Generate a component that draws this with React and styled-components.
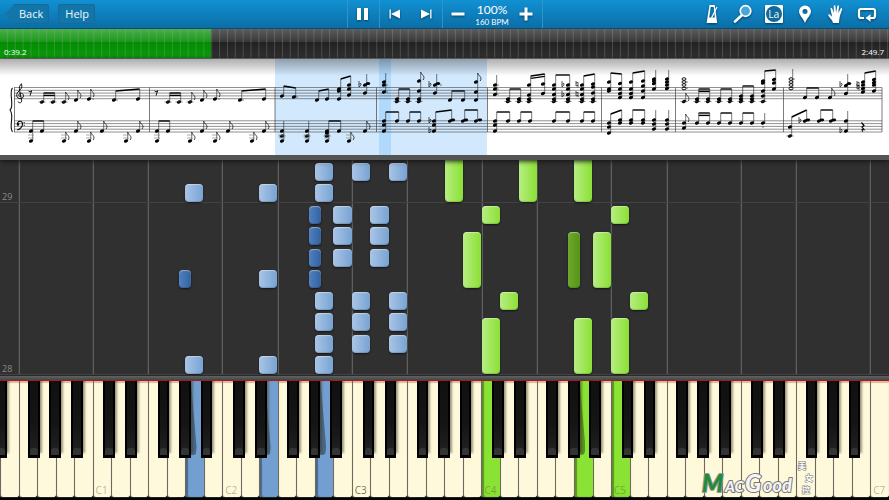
import React from 'react';
import styled, { createGlobalStyle, css } from 'styled-components';

const GlobalStyle = createGlobalStyle`
    * {
        box-sizing: border-box;
    }

    body {
        margin: 0;
        background: #303030;
        font-family: 'Open Sans', 'Noto Sans', sans-serif;
    }

    button {
        font-family: inherit;
        padding: 0;
        border: none;
        background: none;
        cursor: pointer;
    }
`;

const Page = styled.div`
    display: flex;
    flex-direction: column;
    min-height: 100vh;
    overflow: hidden;
`;

/* toolbar */

const Toolbar = styled.header`
    display: grid;
    grid-template-columns: 1fr auto 1fr;
    height: 29px;
    background: linear-gradient(#1191d3, #0b6ea6);
    border-bottom: 1px solid #0a4c72;
    color: #ffffff;
`;

const ToolbarLeft = styled.div`
    display: flex;
    align-items: center;
    gap: 9px;
    padding-left: 5px;
`;

const ToolbarCenter = styled.div`
    display: flex;
    border-right: 1px solid #3293c6;
`;

const ToolbarRight = styled.div`
    display: flex;
    align-items: center;
    justify-content: flex-end;
    padding-right: 7px;
`;

const TextButton = styled.button`
    height: 20px;
    padding: 0 6px 0 7px;
    border-radius: 3px;
    background: #1276ab;
    box-shadow: inset 0 0 1px 1px #1a6a98;
    color: #f0f8fd;
    font-size: 11px;
    font-weight: 500;
    line-height: 20px;

    ${({ $arrow }) => $arrow && css`
        padding-left: 14px;
        clip-path: polygon(0 50%, 9px 0, 100% 0, 100% 100%, 9px 100%);
    `}
`;

const Group = styled.div`
    display: flex;
    align-items: center;
    border-left: 1px solid #3293c6;
`;

const IconButton = styled.button`
    display: flex;
    align-items: center;
    justify-content: center;
    width: 31px;
    height: 28px;
    color: #ffffff;
    filter: drop-shadow(0 1px 1px rgba(0, 40, 70, 0.7));
`;

const Tempo = styled.div`
    display: flex;
    flex-direction: column;
    align-items: center;
    width: 37px;
    font-family: Lato, sans-serif;
    white-space: nowrap;
`;

const TempoPercent = styled.span`
    font-size: 12px;
    line-height: 15px;
`;

const TempoBpm = styled.span`
    font-size: 8px;
    line-height: 10px;
`;

/* timeline */

const Timeline = styled.div`
    position: relative;
    display: flex;
    align-items: flex-end;
    justify-content: space-between;
    height: 30px;
    padding: 0 5px 0 4px;
    border-bottom: 1px solid #777777;
    background: linear-gradient(#5c5c5c, #393939 44%, #222222 46%, #303030);
    color: #ffffff;
    font-size: 8px;
    line-height: 13px;

    &::after {
        content: '';
        position: absolute;
        inset: 0;
        background: linear-gradient(90deg, transparent calc(100% - 1px), rgba(160, 160, 160, 0.3) 0) 0 0 / calc(100% / 113) 100%;
    }
`;

const Played = styled.div`
    position: absolute;
    inset: 0 auto 0 0;
    background: linear-gradient(#4bae4b, #1b981b 44%, #028c02 46%, #0b9a0b);
`;

const Time = styled.span`
    position: relative;
    z-index: 1;
`;

/* sheet music */

const Sheet = styled.section`
    background: #ffffff;
    border-bottom: 5px solid #535555;
    box-shadow: 0 1px 5px #111111;
    z-index: 1;

    svg {
        display: block;
        width: 100%;
        height: auto;
    }
`;

/* falling notes */

const Roll = styled.section`
    position: relative;
    flex: 1;
    min-height: 215px;
    overflow: hidden;
    background: #303030;
`;

const OctaveLine = styled.div`
    position: absolute;
    top: 0;
    bottom: 0;
    width: 1px;
    background: #5f5f5f;
    box-shadow: -1px 0 0 #3c3c3c;
`;

const MeasureLine = styled.div`
    position: absolute;
    left: 0;
    right: 0;
    height: 1px;
    background: #424242;
`;

const MeasureNumber = styled.span`
    position: absolute;
    left: 2px;
    color: #8a8a8a;
    font-size: 9px;
    line-height: 12px;
`;

const noteColors = {
    blue: 'linear-gradient(90deg, #a9c5e6, #78a3d3)',
    darkBlue: 'linear-gradient(90deg, #4f80c0, #33629f)',
    green: 'linear-gradient(90deg, #b6ee82, #8be034)',
    darkGreen: 'linear-gradient(90deg, #6ca82c, #559417)',
};

const Note = styled.div`
    position: absolute;
    border-radius: 4px;
    background: ${({ $color }) => noteColors[$color]};
    box-shadow: 0 1px 2px #151515, inset 0 1px 1px rgba(255, 255, 255, 0.4), inset 0 -1px 1px rgba(0, 0, 0, 0.15);
`;

const Ledge = styled.div`
    height: 5px;
    border-top: 1px solid #2a2a2a;
    background: linear-gradient(#626262, #454545);
`;

/* keyboard */

const Keyboard = styled.section`
    position: relative;
    display: flex;
    height: 120px;
    border-top: 1px solid #a01c20;
    border-bottom: 2px solid #000000;
    background: #000000;
    overflow: hidden;
`;

const KeySlot = styled.div`
    position: relative;
    flex: 1;
    min-width: 0;
`;

const keyColors = { ivory: '#fff9dc', blue: '#739fd0', green: '#8ae234' };

const WhiteKey = styled.button`
    display: flex;
    align-items: flex-end;
    width: 100%;
    height: 100%;
    padding: 0 0 0 2px;
    border-left: 1px solid #6c6a5e;
    border-bottom: 1px solid #222222;
    border-radius: 0 0 3px 3px;
    background: ${({ $color }) => keyColors[$color]};
    box-shadow: inset 0 2px 1px rgba(160, 60, 50, 0.35);
    color: ${({ $strong }) => ($strong ? 'rgba(60, 55, 20, 0.7)' : 'rgba(80, 75, 30, 0.4)')};
    font-size: 10px;
    line-height: 14px;

    ${({ $color }) => $color !== 'ivory' && css`
        box-shadow: inset 2px 0 1px rgba(0, 0, 0, 0.35);
    `}
`;

const BlackKey = styled.button`
    position: absolute;
    top: 0;
    left: ${({ $left }) => $left}%;
    z-index: 1;
    width: 63%;
    height: 77px;
    border: 2px solid #000000;
    border-top: none;
    border-bottom-width: 3px;
    background: linear-gradient(#101010, #151515 60%, #222222);
    box-shadow: 2px -5px 2px rgba(60, 55, 30, 0.5);

    &::after {
        content: '';
        position: absolute;
        left: 0;
        right: 0;
        bottom: 0;
        height: 7px;
        border-radius: 3px 3px 0 0;
        background: #343434;
    }
`;

const KeyShade = styled.div`
    position: absolute;
    top: 0;
    left: 10%;
    width: 52%;
    height: 74px;
    border-radius: 0 0 4px 0;
    background: rgba(0, 0, 0, 0.35);
    clip-path: polygon(0 0, 40% 0, 100% 90%, 90% 100%, 0 100%);
`;

const Watermark = styled.svg`
    position: absolute;
    right: 69px;
    bottom: 0;
    z-index: 2;
    width: 120px;
    height: 38px;
`;

/* E0 .. C7, C1 is the sixth white key */
const KEY_COUNT = 48;
const LETTERS = 'CDEFGAB';
const BLACK_OFFSET = { C: 58, D: 77, F: 51, G: 67, A: 83 };
const PRESSED = { 10: 'blue', 14: 'blue', 17: 'blue', 26: 'green', 31: 'green', 33: 'green' };

const keys = Array.from({ length: KEY_COUNT }, (_, i) => {
    const letter = LETTERS[(i + 2) % 7];
    return { i, letter, octave: Math.floor((i + 2) / 7), color: PRESSED[i] || 'ivory' };
});

// key, starting steps, length in steps
const SHORT = 0.84;
const LONG = 2.64;
const notes = [
    [10, [0, 8], SHORT, 'blue'],
    [14, [0, 4, 8], SHORT, 'blue'],
    [17, [0, 1, 2, 3, 8, 9], SHORT, 'blue'],
    [18, [5, 6, 7], SHORT, 'blue'],
    [19, [1, 2, 3, 9], SHORT, 'blue'],
    [20, [5, 6, 7], SHORT, 'blue'],
    [21, [1, 2, 3, 9], SHORT, 'blue'],
    [9, [4], SHORT, 'darkBlue'],
    [16, [4, 5, 6, 7], SHORT, 'darkBlue'],
    [24, [8], LONG, 'green'],
    [28, [8], LONG, 'green'],
    [31, [0, 8], LONG, 'green'],
    [26, [0], LONG, 'green'],
    [26, [7], SHORT, 'green'],
    [25, [4], LONG, 'green'],
    [27, [3], SHORT, 'green'],
    [30, [4], LONG, 'darkGreen'],
    [32, [4], LONG, 'green'],
    [33, [0], LONG, 'green'],
    [33, [7], SHORT, 'green'],
    [34, [3], SHORT, 'green'],
].flatMap(([key, steps, length, color]) => steps.map((step) => ({ key, step, length, color })));

const noteStyle = ({ key, step, length, color }) => {
    const sharp = color.startsWith('dark');
    const offset = sharp ? BLACK_OFFSET[LETTERS[(key + 2) % 7]] / 100 : 0;
    return {
        left: `${((key + offset) / KEY_COUNT) * 100}%`,
        width: `${((sharp ? 0.64 : 0.98) / KEY_COUNT) * 100}%`,
        bottom: `${step * 10 + 0.3}%`,
        height: `${length * 10}%`,
    };
};

/* Sheet drawing. A group is [chords, beamFrom, beamTo, beams]
   and a chord is [x, heads]. Groups of one chord take a flag instead of a beam. */
const opening = [
    [[[42, [43]], [53, [43]]], 34, 34, 2],
    [[[64, [43]]], 33, 33, 1],
    [[[76, [41]]], 31, 31, 1],
    [[[89, [40]]], 30, 30, 1],
    [[[114, [41]], [138, [40]]], 32, 30, 1],
    [[[31, [72, 82]], [42, [72]]], 62, 62, 1],
    [[[64, [82]]], 73, 73, 1],
    [[[76, [72]]], 62, 62, 1],
    [[[89, [82]]], 73, 73, 1],
    [[[102, [72]]], 62, 62, 1],
    [[[126, [82]]], 73, 73, 1],
    [[[138, [72]]], 62, 62, 1],
];

const C3 = [26, 30, 35.5, 40, 42.5];
const groups = [
    [[[282, [37]], [294, [38]]], 27, 29, 1],
    [[[317, [41]], [327, [40]]], 32, 30, 1],
    [[[339, [30, 32, 40]], [349, [26, 30, 36]]], 20, 17, 1],
    [[[365, [26, 34]], [368, [24.5]]], 15, 15, 0],
    [[[282, [72, 77, 82]]], 62, 62, 0],
    [[[307, [72, 77, 82]]], 62, 62, 0],
    [[[327, [72, 74, 77, 82]], [339, [72]]], 62, 62, 1],
    [[[349, [82]]], 73, 73, 1],
    [[[365, [72]]], 62, 62, 1],

    [[[384, [23, 26, 33]]], 14, 14, 0],
    [[[397, [40, 42.5]], [408, [40, 42.5]]], 30, 30, 1],
    [[[419, [22, 32, 40, 42.5]]], 13, 13, 1],
    [[[435, [26, 34]], [438, [24.5]]], 15, 15, 0],
    [[[450, [41]], [463, [41]]], 32, 32, 1],
    [[[476, [23, 33, 41]]], 14, 14, 1],
    [[[384, [62, 66, 72]], [397, [62]]], 53, 53, 1],
    [[[408, [62]], [419, [62]]], 53, 53, 1],
    [[[434, [62, 66, 72]], [450, [62]]], 53, 51, 1],
    [[[463, [62]], [476, [62]]], 51, 51, 1],

    [[[495, [26, 30, 35.5]]], 16, 16, 0],
    [[[508, [40, 42.5]], [519, [40, 42.5]]], 30, 30, 1],
    [[[529, [26, 36, 40, 42.5]], [543, [25, 34.5]]], 17, 15, 2],
    [[[554, C3], [568, C3]], 16, 16, 1],
    [[[582, C3], [593, [25, 28, 34, 40, 42.5]]], 17, 15, 1],
    [[[495, [62, 66, 72]], [508, [62]]], 53, 53, 1],
    [[[519, [62]], [530, [62]]], 53, 53, 1],
    [[[554, [62]], [568, [62]]], 53, 53, 1],
    [[[582, [62]], [593, [62]]], 53, 53, 1],

    [[[609, [23, 30, 32]], [620, [24.5, 30, 34.5, 38.5]]], 14, 15, 1],
    [[[631, [23, 30, 34.5, 38.5]], [643, [22, 27, 32, 38.5]]], 14, 12, 1],
    [[[654, [20, 22, 24.5, 30]]], 11, 11, 0],
    [[[667, [20, 23, 26, 29.5]]], 11, 11, 0],
    [[[609, [64, 68, 74]], [620, [61, 64]]], 55, 51, 1],
    [[[631, [61, 64]], [643, [61, 64]]], 51, 51, 1],
    [[[654, [61, 65, 70]]], 51, 51, 0],
    [[[667, [61, 65, 70]]], 51, 51, 0],

    [[[684, [42.5]]], 34, 34, 1],
    [[[697, [40, 42.5]], [708, [40, 42.5]]], 30, 30, 2],
    [[[719, [40, 42.5]], [730, [40, 42.5]]], 30, 30, 1],
    [[[741, [37, 40, 42.5]], [752, [37, 40, 42.5]]], 27, 27, 1],
    [[[763, [22, 24, 32, 37, 42.5]], [774, [20.5, 24, 30]]], 12, 11, 1],
    [[[684, [64, 69]]], 55, 55, 1],
    [[[697, [64]], [708, [64]]], 54, 54, 2],
    [[[719, [64]], [730, [64]]], 54, 54, 1],
    [[[741, [64]], [752, [64]]], 54, 54, 1],
    [[[763, [64]]], 54, 54, 0],

    [[[805, [38.5]], [817, [38.5]]], 29, 29, 1],
    [[[830, [38.5]]], 29, 29, 1],
    [[[846, [26.5, 34.5]], [849, [24.5]]], 15, 15, 0],
    [[[863, [23, 26, 29.5, 33]], [874, [20.5, 23.5, 26, 32]]], 14, 12, 1],
    [[[790, [68, 77]], [805, [62]]], 58, 51, 1],
    [[[819, [62]], [831, [62]]], 51, 51, 1],
    [[[846, [62, 72]]], 52, 52, 0],
];

const pairs = [[453, 61], [466, 61], [480, 61], [808, 61], [822, 61], [834, 61]];
const dots = [[93, 40], [117, 41], [219, 40], [243, 41], [297, 38], [387, 33], [387, 26], [441, 26], [498, 26], [498, 30], [498, 35], [687, 23], [687, 29], [763, 68], [794, 20]];
const flats = [[359, 28], [429, 28], [429, 64], [429, 74], [562, 28], [562, 38], [799, 64], [840, 28], [840, 74]];
const naturals = [[576, 28], [576, 38], [857, 28], [857, 31]];

const Chord = ({ x, heads, top }) => (
    <g>
        {heads.map((y) => (
            <ellipse key={y} cx={x} cy={y} rx="2.2" ry="1.5" transform={`rotate(-20 ${x} ${y})`} />
        ))}
        <path d={`M${x + 1.7} ${Math.max(...heads)}V${top}`} stroke="#222" strokeWidth="0.6" />
        {heads.filter((y) => (y > 42 && y < 44) || y === 77).map((y) => (
            <path key={y} d={`M${x - 3.5} ${y}h7`} stroke="#333" strokeWidth="0.6" />
        ))}
        {heads.some((y) => y > 80) && (
            <path d={`M${x - 3} 76h6m-6 3h6`} stroke="#777" strokeWidth="0.6" />
        )}
    </g>
);

const NoteGroup = ({ chords, from, to, beams }) => {
    const first = chords[0][0] + 1.7;
    const last = chords[chords.length - 1][0] + 1.7;
    if (chords.length === 1) {
        return (
            <g>
                <Chord x={chords[0][0]} heads={chords[0][1]} top={from} />
                {beams > 0 && <path d={`M${first} ${from}c.4 3 5 3.500 2.500 8`} fill="none" stroke="#111" strokeWidth="0.8" />}
            </g>
        );
    }
    return (
        <g>
            {beams === 0
                ? (
                    <g>
                        <Chord x={chords[0][0]} heads={chords[0][1]} top={from} />
                        <ellipse cx={chords[1][0]} cy={chords[1][1][0]} rx="2.2" ry="1.5" />
                    </g>
                )
                : chords.map(([x, heads], i) => <Chord key={x} x={x} heads={heads} top={i ? to : from} />)}
            {Array.from({ length: beams }, (_, i) => (
                <path key={i} d={`M${first} ${from + i * 2.4}L${last} ${to + i * 2.4}`} stroke="#000" strokeWidth="1.4" />
            ))}
        </g>
    );
};

const Groups = ({ items }) => items.map(([chords, from, to, beams], i) => (
    <NoteGroup key={i} chords={chords} from={from} to={to} beams={beams} />
));

const EighthRest = ({ x, y }) => (
    <path d={`M${x - 1.5} ${y - 2}q1.500 2 3.200-.3l-1.700 5`} fill="none" stroke="#000" strokeWidth="0.9" />
);

const Score = () => (
    <svg viewBox="0 0 889 96" role="img" aria-label="Sheet music">
        <defs>
            <linearGradient id="fade" x2="0" y2="1">
                <stop stopColor="#000" stopOpacity="0.32" />
                <stop offset="1" stopColor="#000" stopOpacity="0" />
            </linearGradient>
        </defs>
        <path d="M275 0h212v96H275z" fill="#d1e8fd" />
        <path d="M379 0h12v96h-12z" fill="#b0d9fc" />
        <path d="M0 0h889v17H0z" fill="url(#fade)" />
        {[28.5, 31.3, 34.1, 36.9, 39.7, 61.8, 64.6, 67.4, 70.2, 73].map((y) => (
            <path key={y} d={`M14 ${y}H882`} stroke="#444" strokeWidth="0.6" />
        ))}
        {[14.5, 149.5, 275, 376.5, 487.5, 601.5, 675.5, 783.5, 882].map((x) => (
            <path key={x} d={`M${x} 28.500V73`} stroke="#444" strokeWidth="0.7" />
        ))}
        <path d="M12.500 29Q10.500 31 11.500 40T10 51Q12.500 54 11.500 62T12.500 73" fill="none" stroke="#111" strokeWidth="1.1" />
        <path d="M20.500 37.500c-2 .5-2.500-3 .2-3.300 3.400-.2 4 4.800.2 5.400-5 .4-5.400-5-1.900-7.600 2.500-2.200 3.400-4 2.500-7.200-2.100 1-2.500 4-1.800 7l2 10c.1 2.400-3.300 2.600-3.500.7" fill="none" stroke="#000" strokeWidth="0.9" />
        <path d="M17.500 65.500c-.2-4 5-4.500 5-.6 0 3.200-2.400 5-5.200 6.200" fill="none" stroke="#000" strokeWidth="1.1" />
        <circle cx="18" cy="65.500" r="1.200" />
        <circle cx="24.200" cy="63.500" r="0.600" />
        <circle cx="24.200" cy="66.200" r="0.600" />

        <EighthRest x={30} y={34} />
        <Groups items={opening} />
        <g transform="translate(126)">
            <EighthRest x={30} y={34} />
            <Groups items={opening} />
        </g>
        <Groups items={groups} />

        {[20, 23, 26, 29.5].map((y) => (
            <g key={y} fill="none" stroke="#000" strokeWidth="0.9">
                <ellipse cx="684" cy={y} rx="2" ry="1.300" />
                <ellipse cx="791" cy={y} rx="2" ry="1.300" />
            </g>
        ))}
        <path d="M792.700 29V10" stroke="#222" strokeWidth="0.6" />
        {pairs.map(([x, y]) => <ellipse key={x} cx={x} cy={y} rx="2.200" ry="1.400" />)}
        {dots.map(([x, y]) => <circle key={`${x}-${y}`} cx={x} cy={y} r="0.600" />)}
        {flats.map(([x, y]) => (
            <path key={`${x}-${y}`} d={`M${x} ${y - 6}v6q3-2 2-3.200t-2 .7`} fill="none" stroke="#111" strokeWidth="0.7" />
        ))}
        {naturals.map(([x, y]) => (
            <path key={`${x}-${y}`} d={`M${x} ${y - 6}v5l2-.7m-2-2.300l2-.7v5`} fill="none" stroke="#111" strokeWidth="0.7" />
        ))}
        <path d="M861.500 63.500l2.500 3-2 1.500 2 2.500q-3.500-.8-1 2" fill="none" stroke="#000" strokeWidth="1.200" />
    </svg>
);

const Icon = ({ size = 20, children }) => (
    <svg width={size} height={size} viewBox="0 0 20 20" fill="currentColor" aria-hidden="true">{children}</svg>
);

const PauseIcon = () => <Icon><path d="M4 4h4v12H4zM11 4h4v12h-4z" /></Icon>;
const PreviousIcon = () => <Icon><path d="M4.500 5.500h1.300v9H4.500zM15 5.500v9L6 10z" /></Icon>;
const NextIcon = () => <Icon><path d="M14.200 5.500h1.300v9h-1.300zM5 5.500v9l9-4.500z" /></Icon>;
const MinusIcon = () => <Icon><path d="M3.500 8.500h13v3h-13z" /></Icon>;
const PlusIcon = () => <Icon><path d="M8.500 3.500h3v5h5v3h-5v5h-3v-5h-5v-3h5z" /></Icon>;

const MetronomeIcon = () => (
    <Icon>
        <path fillRule="evenodd" d="M7.500 1h5.200l2.500 18H4.600zM8.700 3L7.200 13.500h5.600L11.700 3z" />
        <path d="M9.500 14l5.500-11" stroke="currentColor" strokeWidth="1.300" />
    </Icon>
);

const LensIcon = () => (
    <Icon>
        <circle cx="12.500" cy="7" r="5.300" fill="#49a6dc" stroke="currentColor" strokeWidth="1.700" />
        <path d="M8.500 11.500L2 17.500" stroke="currentColor" strokeWidth="2.600" strokeLinecap="round" />
    </Icon>
);

const NoteNameIcon = () => (
    <Icon>
        <rect x="1" y="1" width="18" height="18" rx="1" />
        <circle cx="10" cy="10" r="8" fill="#12699c" />
        <text x="10" y="13.500" textAnchor="middle" fontSize="10">La</text>
    </Icon>
);

const PinIcon = () => (
    <Icon>
        <path fillRule="evenodd" d="M10 1.500a6 6 0 0 1 6 6C16 11 12 14 10 19 8 14 4 11 4 7.500a6 6 0 0 1 6-6zM10 5a2.500 2.500 0 1 0 0 5 2.500 2.500 0 0 0 0-5z" />
    </Icon>
);

const HandIcon = () => (
    <Icon>
        <path d="M7 19c-.3-2.800-3.200-4.500-4.700-7.500-.5-1.200 1-1.600 1.800-.8l2 2L4.500 5c-.2-1.400 1.300-1.700 1.700-.4L7.800 9 7.700 2.300c0-1.400 1.700-1.400 1.800 0L10 8.700l1.300-6.500c.3-1.300 1.900-1 1.700.3l-.7 6.700 2.200-4.500c.6-1.100 2-.5 1.600.7L13.900 12c-.4 2.500-.9 4-.9 7z" />
    </Icon>
);

const LoopIcon = () => (
    <Icon>
        <path d="M7 14H4q-2 0-2-2V7q0-2 2-2h12q2 0 2 2v5q0 2-2 2h-3" fill="none" stroke="currentColor" strokeWidth="2.200" />
        <path d="M8.500 14l5-3.700v7.400z" />
    </Icon>
);

const tools = [
    ['Metronome', MetronomeIcon],
    ['Zoom', LensIcon],
    ['Note names', NoteNameIcon],
    ['Bookmark', PinIcon],
    ['Hands', HandIcon],
    ['Loop', LoopIcon],
];

const Logo = () => (
    <Watermark viewBox="0 0 120 38" aria-label="MacGood">
        <g fontFamily="Lato, sans-serif" fontWeight="900" fontStyle="italic" stroke="#777" strokeWidth="2" paintOrder="stroke" strokeLinejoin="round">
            <text x="2" y="32" fontSize="24" fill="#238a3c" stroke="#999999">M</text>
            <text x="25" y="32" fontSize="15" fill="#f4f4f4">AC</text>
            <text x="45" y="32" fontSize="24" fill="#f4f4f4">G</text>
            <text x="63" y="32" fontSize="18" fill="#f4f4f4">ood</text>
        </g>
        <g fontFamily="'Noto Sans CJK SC', sans-serif" fontWeight="700" fill="#ffffff" stroke="#777" strokeWidth="1" paintOrder="stroke">
            <text x="98" y="9" fontSize="8">美</text>
            <text x="105" y="21" fontSize="8">女</text>
            <text x="102" y="33" fontSize="8">控</text>
        </g>
    </Watermark>
);

const App = () => (
    <Page>
        <GlobalStyle />
        <Toolbar>
            <ToolbarLeft>
                <TextButton $arrow>Back</TextButton>
                <TextButton>Help</TextButton>
            </ToolbarLeft>
            <ToolbarCenter>
                <Group>
                    <IconButton aria-label="Pause"><PauseIcon /></IconButton>
                </Group>
                <Group>
                    <IconButton aria-label="Previous"><PreviousIcon /></IconButton>
                    <IconButton aria-label="Next"><NextIcon /></IconButton>
                </Group>
                <Group>
                    <IconButton aria-label="Slower"><MinusIcon /></IconButton>
                    <Tempo>
                        <TempoPercent>100%</TempoPercent>
                        <TempoBpm>160 BPM</TempoBpm>
                    </Tempo>
                    <IconButton aria-label="Faster"><PlusIcon /></IconButton>
                </Group>
            </ToolbarCenter>
            <ToolbarRight>
                {tools.map(([label, ToolIcon]) => (
                    <IconButton key={label} aria-label={label}><ToolIcon /></IconButton>
                ))}
            </ToolbarRight>
        </Toolbar>

        <Timeline>
            <Played style={{ width: `${(39.2 / 169.7) * 100 + 0.6}%` }} />
            <Time>0:39.2</Time>
            <Time>2:49.7</Time>
        </Timeline>

        <Sheet>
            <Score />
        </Sheet>

        <Roll>
            {keys.filter(({ letter }) => letter === 'C' || letter === 'F').map(({ i }) => (
                <OctaveLine key={i} style={{ left: `${(i / KEY_COUNT) * 100}%` }} />
            ))}
            {[28, 29].map((measure) => (
                <React.Fragment key={measure}>
                    <MeasureLine style={{ bottom: `${(measure - 28) * 80}%` }} />
                    <MeasureNumber style={{ bottom: `${(measure - 28) * 80}%` }}>{measure}</MeasureNumber>
                </React.Fragment>
            ))}
            {notes.map((note) => (
                <Note key={`${note.key}-${note.step}`} $color={note.color} style={noteStyle(note)} />
            ))}
        </Roll>
        <Ledge />

        <Keyboard>
            {keys.map(({ i, letter, octave, color }) => (
                <KeySlot key={i}>
                    <WhiteKey $color={color} $strong={octave === 3} aria-label={`${letter}${octave}`}>
                        {letter === 'C' && octave !== 6 && `C${octave}`}
                    </WhiteKey>
                    {color !== 'ivory' && BLACK_OFFSET[LETTERS[(i + 1) % 7]] && <KeyShade />}
                    {i === 0 && <BlackKey $left={-25} aria-label="D#0" />}
                    {BLACK_OFFSET[letter] && i < KEY_COUNT - 1 && (
                        <BlackKey $left={BLACK_OFFSET[letter]} aria-label={`${letter}#${octave}`} />
                    )}
                </KeySlot>
            ))}
            <Logo />
        </Keyboard>
    </Page>
);

export default App;
